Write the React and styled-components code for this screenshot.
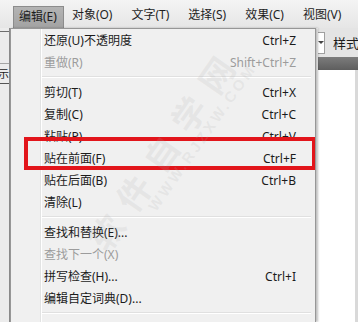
import styled, { createGlobalStyle } from 'styled-components';

const GlobalStyle = createGlobalStyle`
  html, body {
    margin: 0;
    padding: 0;
    background: #fff;
  }
  body {
    font-family: "Noto Sans", "Noto Sans CJK SC", sans-serif;
    font-size: 12px;
    color: #1b1b1b;
  }
`;

const Page = styled.div`
  position: relative;
  width: 358px;
  height: 322px;
  overflow: hidden;
  display: flex;
  flex-direction: column;
  background: #fff;
`;

const MenuBar = styled.div`
  display: flex;
  align-items: center;
  gap: 6px;
  height: 28px;
  padding-left: 13px;
  box-sizing: border-box;
  background: linear-gradient(#f4f4f4, #e6e6e6);
  flex: none;
`;

const BarItem = styled.div`
  line-height: 20px;
  padding: 0 6px 0 5px;
  box-sizing: border-box;
  white-space: nowrap;
  color: #1e1e1e;
  border: 1px solid ${(props) => (props.$active ? '#8c8c8c' : 'transparent')};
  border-bottom: none;
  background: ${(props) => (props.$active ? 'linear-gradient(#b4b4b4, #a2a2a2)' : 'transparent')};
  margin-top: ${(props) => (props.$active ? '6px' : '0')};
  margin-right: ${(props) => (props.$active ? '-4px' : '0')};
  height: ${(props) => (props.$active ? '22px' : '20px')};
`;

const Workspace = styled.div`
  display: flex;
  flex: 1;
  min-height: 0;
`;

const LeftPanel = styled.div`
  width: 10px;
  flex: none;
  display: flex;
  flex-direction: column;
  background: #ececec;
  border-right: 1px solid #8a8a8a;
  box-sizing: border-box;
  padding-top: 3px;
`;

const PanelHead = styled.div`
  height: 31px;
  border-top: 1px solid #6d6d6d;
  border-bottom: 1px solid #a5a5a5;
`;

const VerticalTab = styled.div`
  height: 19px;
  border-bottom: 1px solid #555;
  overflow: hidden;
  font-family: "Noto Sans CJK SC", sans-serif;
  font-size: 11px;
  line-height: 19px;
  margin-left: -2px;
`;

const DropMenu = styled.div`
  position: relative;
  overflow: hidden;
  width: 306px;
  flex: none;
  border: 1px solid #979797;
  border-bottom: none;
  box-sizing: border-box;
  background: linear-gradient(
    to right,
    #f0f0f0 29px,
    #e2e3e3 29px,
    #e2e3e3 30px,
    #ffffff 30px,
    #ffffff 31px,
    #f0f0f0 31px
  );
  box-shadow: 2px 0 2px rgba(0, 0, 0, 0.25);
`;

const Item = styled.div`
  display: flex;
  justify-content: space-between;
  align-items: center;
  height: 22px;
  padding: 0 19px 0 33px;
  font-family: "Noto Sans", "Noto Sans CJK SC", sans-serif;
  color: ${(props) => (props.$disabled ? '#9c9c9c' : '#1b1b1b')};
  white-space: nowrap;
`;

const Shortcut = styled.span`
  font-family: "Noto Sans", sans-serif;
`;

const Separator = styled.div`
  height: 8px;
  display: flex;
  align-items: center;
  padding: 0 4px 0 31px;

  &::after {
    content: '';
    flex: 1;
    height: 1px;
    background: #e0e0e0;
    border-bottom: 1px solid #fff;
  }
`;

const Highlight = styled.div`
  position: absolute;
  left: 13px;
  top: 108px;
  width: 292px;
  height: 33px;
  box-sizing: border-box;
  border: 4px solid #e2151b;
  pointer-events: none;
`;

const Watermark = styled.div`
  position: absolute;
  left: 71px;
  top: 207px;
  transform: rotate(-55deg);
  transform-origin: left top;
  display: flex;
  flex-direction: column;
  pointer-events: none;
  color: rgba(170, 170, 170, 0.16);
  white-space: nowrap;
`;

const MarkBig = styled.span`
  font-family: "Noto Sans CJK SC", sans-serif;
  font-size: 34px;
  font-weight: 700;
  letter-spacing: 14px;
  line-height: 34px;
`;

const MarkSmall = styled.span`
  font-family: "Liberation Sans", sans-serif;
  font-size: 15px;
  font-weight: 700;
  letter-spacing: 3px;
  line-height: 16px;
  padding-left: 62px;
`;

const RightPanel = styled.div`
  flex: 1;
  display: flex;
  flex-direction: column;
  background: #fff;
  padding-left: 2px;
`;

const ToolRow = styled.div`
  display: flex;
  align-items: center;
  gap: 8px;
  height: 29px;
  background: #e4e4e4;
  font-family: "Noto Sans CJK SC", sans-serif;
  font-size: 13px;
  white-space: nowrap;
  overflow: hidden;
`;

const DropBox = styled.div`
  width: 6px;
  height: 20px;
  background: #fff;
  border: 1px solid #a0a0a0;
  border-left: none;
  display: flex;
  align-items: center;
  justify-content: center;
  &::after {
    content: '';
    border: 3px solid transparent;
    border-top: 3px solid #444;
    margin-top: 3px;
  }
`;

const DarkBar = styled.div`
  height: 13px;
  background: linear-gradient(#7c7c7c, #5e5e5e);
`;

const Canvas = styled.div`
  flex: 1;
  border-right: 3px solid #d9d9d9;
  margin-right: 1px;
`;

const items = [
  { label: '还原(U)不透明度', key: 'Ctrl+Z' },
  { label: '重做(R)', key: 'Shift+Ctrl+Z', disabled: true },
  'sep',
  { label: '剪切(T)', key: 'Ctrl+X' },
  { label: '复制(C)', key: 'Ctrl+C' },
  { label: '粘贴(P)', key: 'Ctrl+V' },
  { label: '贴在前面(F)', key: 'Ctrl+F' },
  { label: '贴在后面(B)', key: 'Ctrl+B' },
  { label: '清除(L)' },
  'sep',
  { label: '查找和替换(E)...' },
  { label: '查找下一个(X)', disabled: true },
  { label: '拼写检查(H)...', key: 'Ctrl+I' },
  { label: '编辑自定词典(D)...' },
  'sep',
];

const barItems = ['编辑(E)', '对象(O)', '文字(T)', '选择(S)', '效果(C)', '视图(V)'];

const App = () => {
  return (
    <Page>
      <GlobalStyle />
      <MenuBar>
        {barItems.map((name, i) => (
          <BarItem key={name} $active={i === 0}>
            {name}
          </BarItem>
        ))}
      </MenuBar>
      <Workspace>
        <LeftPanel>
          <PanelHead />
          <VerticalTab>示</VerticalTab>
        </LeftPanel>
        <DropMenu>
          {items.map((it, i) =>
            it === 'sep' ? (
              <Separator key={i} />
            ) : (
              <Item key={i} $disabled={it.disabled}>
                <span>{it.label}</span>
                {it.key && <Shortcut>{it.key}</Shortcut>}
              </Item>
            )
          )}
          <Highlight />
          <Watermark>
            <MarkBig>软件自学网</MarkBig>
            <MarkSmall>WWW.RJZXW.COM</MarkSmall>
          </Watermark>
        </DropMenu>
        <RightPanel>
          <ToolRow>
            <DropBox />
            <span>样式</span>
          </ToolRow>
          <DarkBar />
          <Canvas />
        </RightPanel>
      </Workspace>
    </Page>
  );
};

export default App;
